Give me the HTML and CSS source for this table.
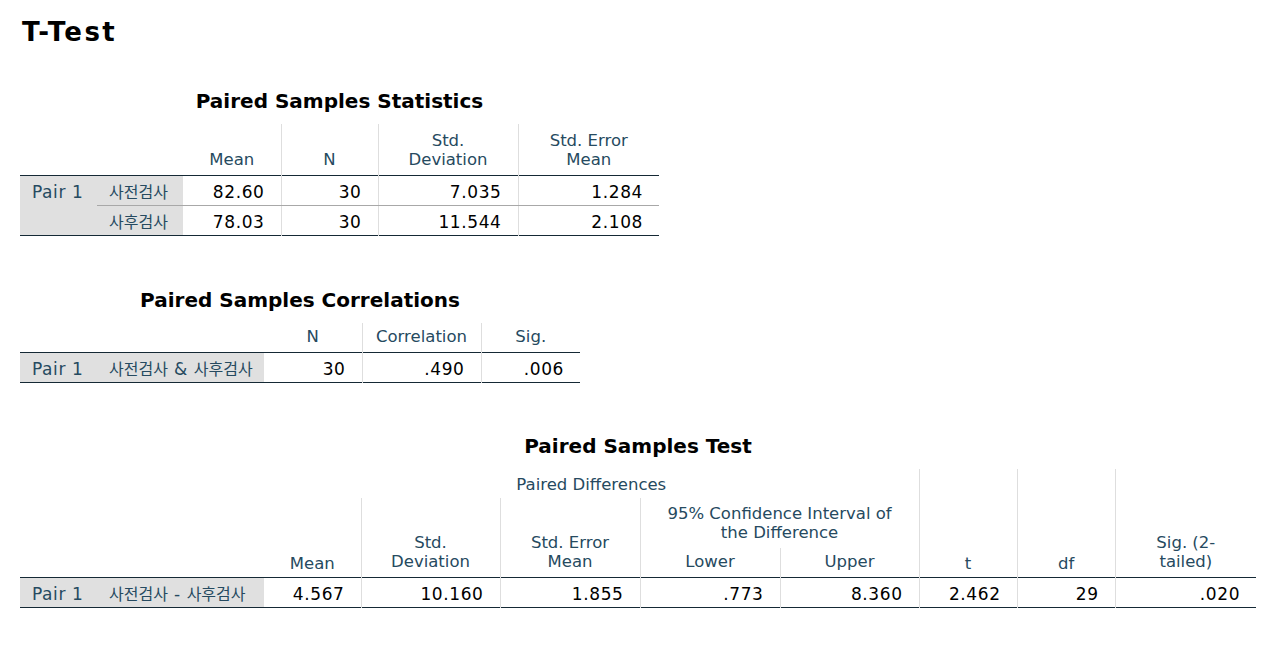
FILE: index.html
```html
<!DOCTYPE html>
<html lang="ko">
<head>
<meta charset="utf-8">
<title>T-Test</title>
<link rel="stylesheet" href="styles.css">
</head>
<body>
<h1 class="page-title">T-Test</h1>

<table class="spss t1">
  <caption>Paired Samples Statistics</caption>
  <colgroup>
    <col class="c77"><col class="c86"><col class="c98"><col class="c97"><col class="c140"><col class="c141">
  </colgroup>
  <thead>
    <tr class="hr51">
      <th colspan="2"></th>
      <th>Mean</th>
      <th class="vl">N</th>
      <th class="vl">Std.<br>Deviation</th>
      <th class="vl">Std. Error<br>Mean</th>
    </tr>
  </thead>
  <tbody>
    <tr>
      <td class="lbl" rowspan="2">Pair 1</td>
      <td class="lbl sep"><span class="ko">사전검사</span></td>
      <td class="sep">82.60</td>
      <td class="vl sep">30</td>
      <td class="vl sep">7.035</td>
      <td class="vl sep">1.284</td>
    </tr>
    <tr>
      <td class="lbl"><span class="ko">사후검사</span></td>
      <td>78.03</td>
      <td class="vl">30</td>
      <td class="vl">11.544</td>
      <td class="vl">2.108</td>
    </tr>
  </tbody>
</table>

<table class="spss t2">
  <caption>Paired Samples Correlations</caption>
  <colgroup>
    <col class="c77"><col class="c167"><col class="c98"><col class="c119"><col class="c99">
  </colgroup>
  <thead>
    <tr class="hr30">
      <th colspan="2"></th>
      <th>N</th>
      <th class="vl">Correlation</th>
      <th class="vl">Sig.</th>
    </tr>
  </thead>
  <tbody>
    <tr>
      <td class="lbl">Pair 1</td>
      <td class="lbl"><span class="ko">사전검사</span> &amp; <span class="ko">사후검사</span></td>
      <td>30</td>
      <td class="vl">.490</td>
      <td class="vl">.006</td>
    </tr>
  </tbody>
</table>

<table class="spss t3">
  <caption>Paired Samples Test</caption>
  <colgroup>
    <col class="c77"><col class="c167"><col class="c97"><col class="c139"><col class="c140"><col class="c140"><col class="c139"><col class="c98"><col class="c98"><col class="c141">
  </colgroup>
  <thead>
    <tr class="hr29">
      <th colspan="2" rowspan="3"></th>
      <th class="low" colspan="5">Paired Differences</th>
      <th class="vl low" rowspan="3">t</th>
      <th class="vl low" rowspan="3">df</th>
      <th class="vl" rowspan="3">Sig. (2-<br>tailed)</th>
    </tr>
    <tr class="hr50">
      <th class="low" rowspan="2">Mean</th>
      <th class="vl" rowspan="2">Std.<br>Deviation</th>
      <th class="vl" rowspan="2">Std. Error<br>Mean</th>
      <th class="vl" colspan="2">95% Confidence Interval of<br>the Difference</th>
    </tr>
    <tr class="hr29">
      <th class="vl">Lower</th>
      <th class="vl">Upper</th>
    </tr>
  </thead>
  <tbody>
    <tr>
      <td class="lbl">Pair 1</td>
      <td class="lbl"><span class="ko">사전검사</span> - <span class="ko">사후검사</span></td>
      <td>4.567</td>
      <td class="vl">10.160</td>
      <td class="vl">1.855</td>
      <td class="vl">.773</td>
      <td class="vl">8.360</td>
      <td class="vl">2.462</td>
      <td class="vl">29</td>
      <td class="vl">.020</td>
    </tr>
  </tbody>
</table>
</body>
</html>
```

FILE: styles.css
```css
html, body {
  background: #ffffff;
}

body {
  margin: 0;
  padding: 17px 0 0 20px;
  font-family: "DejaVu Sans", "Noto Sans CJK KR", sans-serif;
  color: #000000;
}

.page-title {
  margin: 0 0 0 2px;
  font-size: 26px;
  line-height: 30px;
  font-weight: bold;
  letter-spacing: 2.4px;
  color: #000000;
}

.spss {
  border-collapse: collapse;
  table-layout: fixed;
  border-bottom: 1px solid #152935;
}

.spss caption {
  font-size: 20px;
  line-height: 24px;
  font-weight: bold;
  color: #000000;
  padding-bottom: 11px;
  white-space: nowrap;
}

.spss tbody {
  border-top: 1px solid #152935;
}

.t1 { margin-top: 42px; width: 639px; }
.t2 { margin-top: 52px; width: 560px; }
.t3 { margin-top: 51px; width: 1236px; }

.c77 { width: 77px; }
.c86 { width: 86px; }
.c97 { width: 97px; }
.c98 { width: 98px; }
.c99 { width: 99px; }
.c119 { width: 119px; }
.c139 { width: 139px; }
.c140 { width: 140px; }
.c141 { width: 141px; }
.c167 { width: 167px; }

.hr29 { height: 29px; }
.hr30 { height: 30px; }
.hr50 { height: 50px; }
.hr51 { height: 51px; }

.spss th {
  font-weight: normal;
  font-size: 16.5px;
  line-height: 19px;
  color: #264a60;
  text-align: center;
  vertical-align: bottom;
  padding: 0 2px 6px;
  white-space: nowrap;
}

.spss th.low {
  padding-bottom: 4px;
}

.spss td {
  font-size: 17px;
  line-height: 20px;
  height: 20px;
  padding: 6px 16px 3px 12px;
  letter-spacing: 0.6px;
  text-align: right;
  vertical-align: top;
  color: #000000;
  white-space: nowrap;
}

.spss .vl {
  border-left: 1px solid #dedede;
}

.spss td.lbl {
  background: #e0e0e0;
  color: #264a60;
  text-align: left;
}

.spss td.sep {
  border-bottom: 1px solid #a8a8a8;
}

.ko {
  font-size: 16px;
  line-height: 16px;
  letter-spacing: 0;
}
```
